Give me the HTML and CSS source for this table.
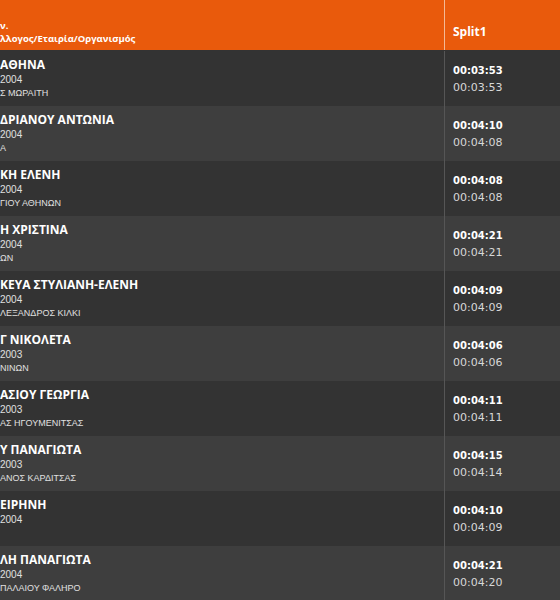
FILE: index.html
```html
<!DOCTYPE html>
<html lang="el">
<head>
<meta charset="utf-8">
<title>Αποτελέσματα</title>
<link rel="stylesheet" href="styles.css">
</head>
<body>
<div class="results">
  <div class="head">
    <div class="h-name">
      <div>ν.</div>
      <div>λλογος/Εταιρία/Οργανισμός</div>
    </div>
    <div class="h-split">Split1</div>
  </div>
  <div class="body">
    <div class="row">
      <div class="c-name"><div class="nm">ΑΘΗΝΑ</div><div class="yr">2004</div><div class="club">Σ ΜΩΡΑΙΤΗ</div></div>
      <div class="c-split"><div class="t1">00:03:53</div><div class="t2">00:03:53</div></div>
    </div>
    <div class="row">
      <div class="c-name"><div class="nm">ΔΡΙΑΝΟΥ ΑΝΤΩΝΙΑ</div><div class="yr">2004</div><div class="club">Α</div></div>
      <div class="c-split"><div class="t1">00:04:10</div><div class="t2">00:04:08</div></div>
    </div>
    <div class="row">
      <div class="c-name"><div class="nm">ΚΗ ΕΛΕΝΗ</div><div class="yr">2004</div><div class="club">ΓΙΟΥ ΑΘΗΝΩΝ</div></div>
      <div class="c-split"><div class="t1">00:04:08</div><div class="t2">00:04:08</div></div>
    </div>
    <div class="row">
      <div class="c-name"><div class="nm">Η ΧΡΙΣΤΙΝΑ</div><div class="yr">2004</div><div class="club">ΩΝ</div></div>
      <div class="c-split"><div class="t1">00:04:21</div><div class="t2">00:04:21</div></div>
    </div>
    <div class="row">
      <div class="c-name"><div class="nm">ΚΕΥΑ ΣΤΥΛΙΑΝΗ-ΕΛΕΝΗ</div><div class="yr">2004</div><div class="club">ΛΕΞΑΝΔΡΟΣ ΚΙΛΚΙ</div></div>
      <div class="c-split"><div class="t1">00:04:09</div><div class="t2">00:04:09</div></div>
    </div>
    <div class="row">
      <div class="c-name"><div class="nm">Γ ΝΙΚΟΛΕΤΑ</div><div class="yr">2003</div><div class="club">ΝΙΝΩΝ</div></div>
      <div class="c-split"><div class="t1">00:04:06</div><div class="t2">00:04:06</div></div>
    </div>
    <div class="row">
      <div class="c-name"><div class="nm">ΑΣΙΟΥ ΓΕΩΡΓΙΑ</div><div class="yr">2003</div><div class="club">ΑΣ ΗΓΟΥΜΕΝΙΤΣΑΣ</div></div>
      <div class="c-split"><div class="t1">00:04:11</div><div class="t2">00:04:11</div></div>
    </div>
    <div class="row">
      <div class="c-name"><div class="nm">Υ ΠΑΝΑΓΙΩΤΑ</div><div class="yr">2003</div><div class="club">ΑΝΟΣ ΚΑΡΔΙΤΣΑΣ</div></div>
      <div class="c-split"><div class="t1">00:04:15</div><div class="t2">00:04:14</div></div>
    </div>
    <div class="row">
      <div class="c-name"><div class="nm">ΕΙΡΗΝΗ</div><div class="yr">2004</div><div class="club">&nbsp;</div></div>
      <div class="c-split"><div class="t1">00:04:10</div><div class="t2">00:04:09</div></div>
    </div>
    <div class="row">
      <div class="c-name"><div class="nm">ΛΗ ΠΑΝΑΓΙΩΤΑ</div><div class="yr">2004</div><div class="club">ΠΑΛΑΙΟΥ ΦΑΛΗΡΟ</div></div>
      <div class="c-split"><div class="t1">00:04:21</div><div class="t2">00:04:20</div></div>
    </div>
  </div>
</div>
</body>
</html>
```
FILE: styles.css
```css
html, body {
  margin: 0;
  padding: 0;
  background: #333333;
  overflow: hidden;
}
.results {
  width: 560px;
  height: 600px;
  overflow: hidden;
  display: flex;
  flex-direction: column;
}
.head {
  display: grid;
  grid-template-columns: 444px 1fr;
  height: 50px;
  background: #e95a0c;
  color: #ffffff;
  font-family: "Open Sans", sans-serif;
  font-weight: 700;
  flex-shrink: 0;
}
.h-name {
  font-size: 9.5px;
  line-height: 13px;
  padding-top: 19px;
  white-space: nowrap;
  overflow: hidden;
}
.h-split {
  border-left: 1px solid #f4b995;
  font-size: 12px;
  line-height: 16px;
  padding: 24px 0 0 8px;
}
.body {
  padding-top: 1px;
}
.row {
  display: grid;
  grid-template-columns: 444px 1fr;
  height: 55px;
  background: #333333;
}
.row:nth-child(even) {
  background: #3e3e3e;
}
.c-name {
  padding-top: 6px;
  white-space: nowrap;
  overflow: hidden;
}
.nm {
  font-family: "Open Sans", sans-serif;
  font-weight: 700;
  font-size: 12px;
  line-height: 15px;
  color: #ffffff;
}
.yr {
  font-family: "Liberation Sans", Arial, sans-serif;
  font-size: 10px;
  line-height: 15px;
  color: #e0e0e0;
}
.club {
  font-family: "Liberation Sans", Arial, sans-serif;
  font-size: 9px;
  line-height: 12px;
  color: #e0e0e0;
}
.c-split {
  border-left: 1px solid #565656;
  padding: 11px 0 0 8px;
  font-family: "DejaVu Sans", Verdana, sans-serif;
}
.t1 {
  font-weight: 700;
  font-size: 10px;
  line-height: 17px;
  color: #ffffff;
}
.t2 {
  font-size: 11px;
  line-height: 18px;
  color: #d8d8d8;
}
```
